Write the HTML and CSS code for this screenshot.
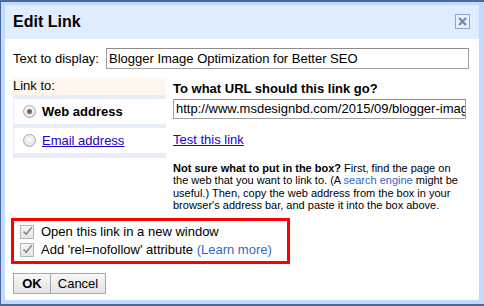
FILE: index.html
```html
<!DOCTYPE html>
<html>
<head>
<meta charset="utf-8">
<link rel="stylesheet" href="styles.css">
</head>
<body>
<div class="frame">
  <div class="dialog">
    <div class="titlebar">
      <span class="title">Edit Link</span>
      <span class="close">
        <svg width="13" height="13" viewBox="0 0 13 13"><path d="M3 3 L10 10 M10 3 L3 10" stroke="#6f86b8" stroke-width="2.2" fill="none"/></svg>
      </span>
    </div>
    <div class="content">
      <div class="display-row">
        <span class="label">Text to display:</span>
        <div class="input wide">Blogger Image Optimization for Better SEO</div>
      </div>
      <div class="main">
        <div class="linkto">
          <div class="linkto-head">Link to:</div>
          <div class="linkto-list">
            <div class="opt">
              <span class="radio checked"></span>
              <span class="opt-sel">Web address</span>
            </div>
            <div class="opt">
              <span class="radio"></span>
              <a class="link">Email address</a>
            </div>
          </div>
        </div>
        <div class="urlcol">
          <div class="heading">To what URL should this link go?</div>
          <div class="input url">http://www.msdesignbd.com/2015/09/blogger-image-optimization-for-better-seo.html</div>
          <a class="link test">Test this link</a>
          <p class="help"><b>Not sure what to put in the box?</b> First, find the page on the web that you want to link to. (A <span class="soft">search engine</span> might be useful.) Then, copy the web address from the box in your browser's address bar, and paste it into the box above.</p>
        </div>
      </div>
      <div class="options">
        <div class="check-row"><span class="checkbox"><svg width="11" height="11" viewBox="0 0 11 11"><path d="M1.5 5.5 L4.2 8.3 L9.8 1.2" stroke="#8a8a8a" stroke-width="1.6" fill="none"/></svg></span><span>Open this link in a new window</span></div>
        <div class="check-row"><span class="checkbox"><svg width="11" height="11" viewBox="0 0 11 11"><path d="M1.5 5.5 L4.2 8.3 L9.8 1.2" stroke="#8a8a8a" stroke-width="1.6" fill="none"/></svg></span><span>Add 'rel=nofollow' attribute <span class="soft">(Learn more)</span></span></div>
      </div>
      <div class="buttons">
        <span class="btn ok">OK</span><span class="btn">Cancel</span>
      </div>
    </div>
  </div>
</div>
</body>
</html>
```
FILE: styles.css
```css
html, body {
  margin: 0;
  padding: 0;
}
body {
  width: 484px;
  height: 306px;
  overflow: hidden;
  font-family: "Liberation Sans", Arial, sans-serif;
  color: #000;
}
.frame {
  width: 484px;
  height: 306px;
  box-sizing: border-box;
  background: #c3d9ff;
  border-top: 2px solid #4a6a9c;
  border-left: 1px solid #4a6a9c;
  border-bottom: 2px solid #4a6a9c;
  padding: 3px 5px 4px 4px;
}
.dialog {
  background: #fff;
  height: 100%;
  display: flex;
  flex-direction: column;
}
.titlebar {
  height: 34px;
  background: #e0edfe;
  display: flex;
  align-items: center;
  justify-content: space-between;
  padding: 0 9px 0 8px;
}
.title {
  font-size: 16px;
  font-weight: bold;
  line-height: 34px;
}
.close {
  width: 13px;
  height: 13px;
  border: 1px solid #8fa3cc;
  background: #e8f0fd;
  display: flex;
  margin-top: -1px;
}
.content {
  padding: 9px 10px 0 8px;
  font-size: 13px;
}
.display-row {
  display: flex;
  align-items: center;
  gap: 7px;
}
.input {
  box-sizing: border-box;
  border: 1px solid #a0a0a0;
  border-top-color: #8c8c8c;
  padding: 0 2px;
  white-space: nowrap;
  overflow: hidden;
  font-size: 13px;
}
.wide {
  flex: 1;
  height: 21px;
  line-height: 19px;
}
.main {
  display: flex;
  margin-top: 9px;
}
.linkto {
  width: 153px;
  flex: none;
}
.linkto-head {
  background: #fff6ee;
  height: 17px;
  line-height: 15px;
}
.linkto-list {
  background: #e8eef7;
  padding: 4px 0 5px 1px;
  display: flex;
  flex-direction: column;
  gap: 4px;
}
.opt {
  background: #fff;
  height: 25px;
  display: flex;
  align-items: center;
  padding-left: 9px;
}
.radio {
  width: 11px;
  height: 11px;
  border-radius: 50%;
  border: 1px solid #a9a9a9;
  background: radial-gradient(circle at 50% 40%, #fdfdfd, #dcdcdc);
  margin-right: 6px;
  position: relative;
  flex: none;
}
.radio.checked::after {
  content: "";
  position: absolute;
  left: 3px;
  top: 3px;
  width: 5px;
  height: 5px;
  border-radius: 50%;
  background: #666;
}
.opt-sel {
  font-weight: bold;
  font-size: 13px;
}
.link {
  color: #2200cc;
  text-decoration: underline;
}
.urlcol {
  margin-left: 7px;
  flex: 1;
}
.heading {
  font-weight: bold;
  font-size: 13px;
  line-height: 17px;
  margin-top: 2px;
}
.url {
  height: 20px;
  line-height: 18px;
  width: 293px;
  margin-top: 2px;
}
.test {
  display: block;
  margin-top: 13px;
  line-height: 15px;
}
.help {
  font-size: 11px;
  line-height: 12.4px;
  margin: 15px 0 0 0;
  width: 292px;
}
.soft {
  color: #3366cc;
}
.options {
  margin-top: 6px;
  margin-left: -2px;
  width: 279px;
  box-sizing: border-box;
  border: 3px solid #ff0000;
  padding: 2px 0 2px 6px;
}
.check-row {
  display: flex;
  align-items: center;
  height: 18px;
  font-size: 13px;
}
.checkbox {
  width: 12px;
  height: 12px;
  border: 1px solid #b4b4b4;
  background: linear-gradient(#f6f6f6, #e6e6e6);
  margin-right: 7px;
  display: flex;
  align-items: center;
  justify-content: center;
  flex: none;
}
.buttons {
  margin-top: 9px;
  display: flex;
}
.btn {
  height: 21px;
  box-sizing: border-box;
  border: 1px solid #a8a8a8;
  background: linear-gradient(#f8f8f8, #e2e2e2);
  line-height: 19px;
  font-size: 13px;
  text-align: center;
}
.btn.ok {
  font-weight: bold;
  width: 37px;
  border-right: none;
}
.btn + .btn {
  width: 56px;
}
```
